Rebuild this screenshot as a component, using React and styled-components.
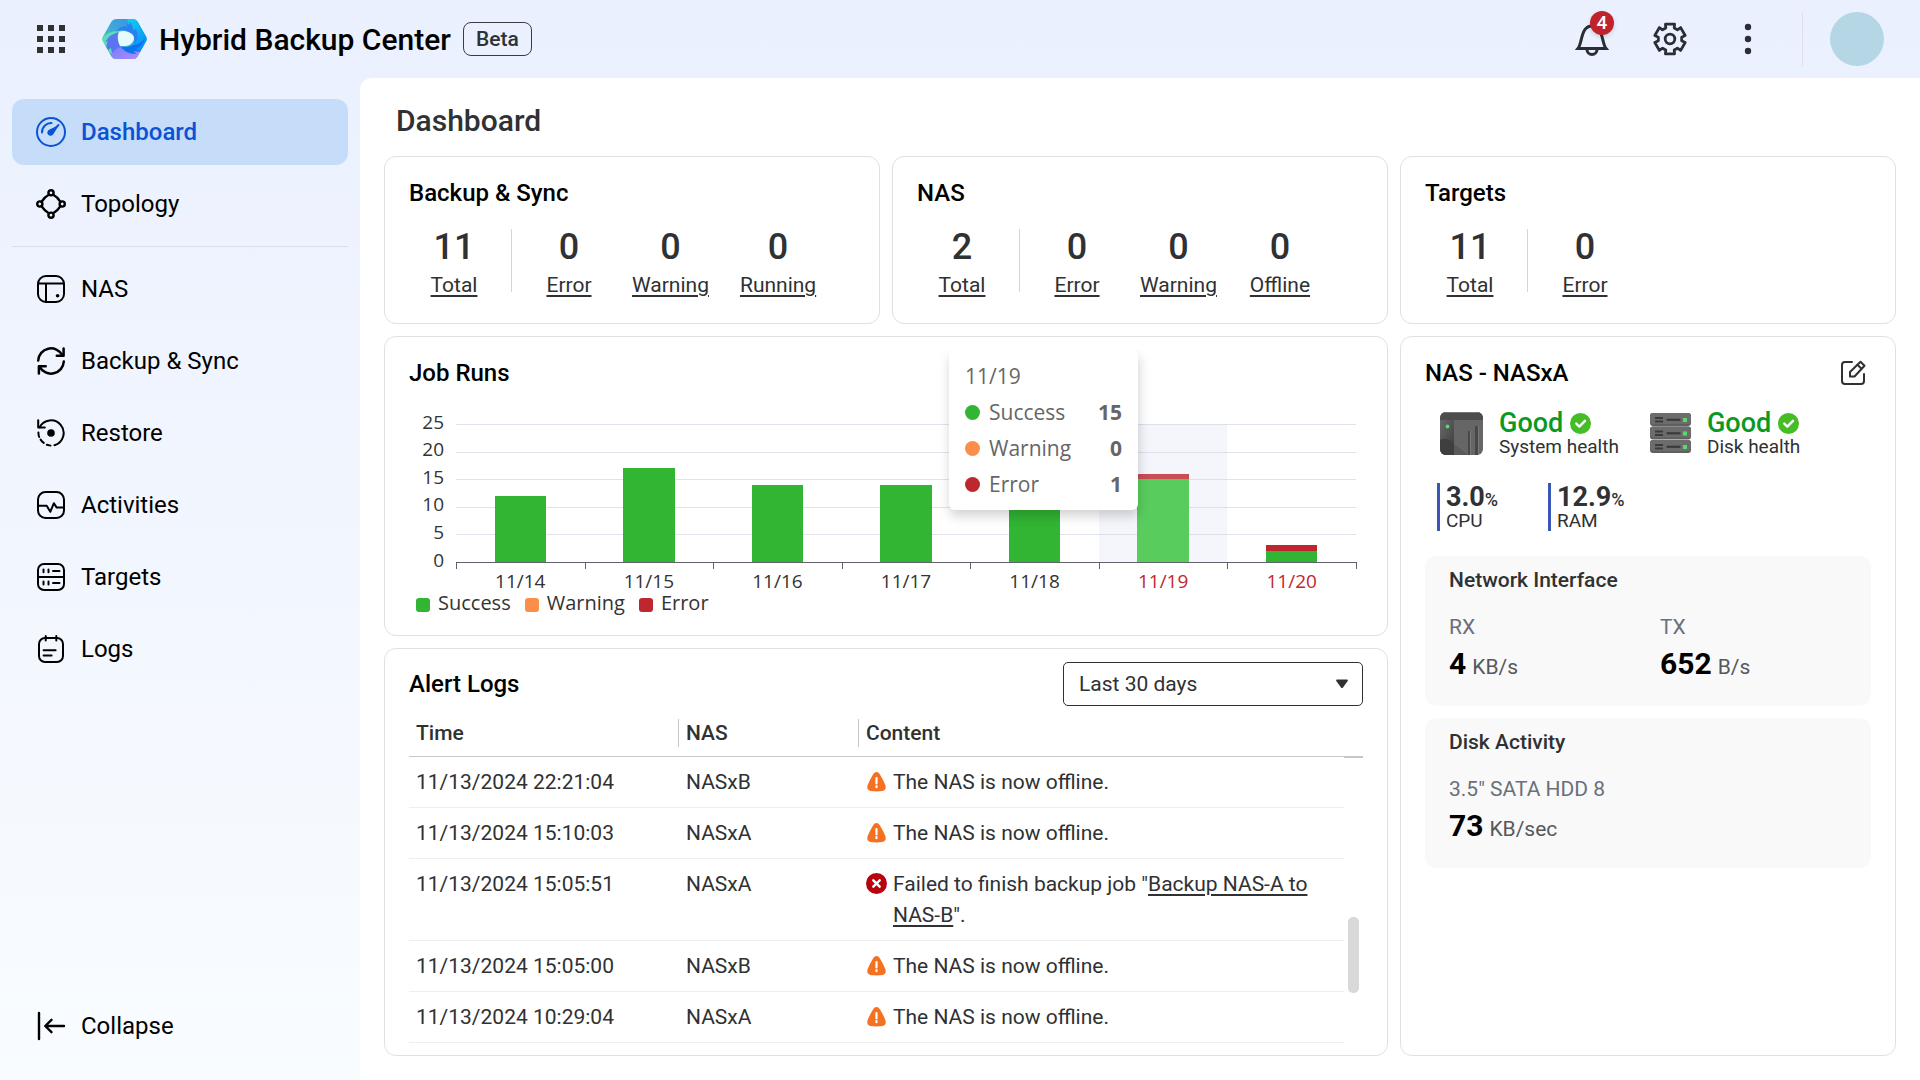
import React, { useState } from "react"
import styled, { createGlobalStyle } from "styled-components"

const GlobalStyle = createGlobalStyle`
  *,
  *::before,
  *::after {
    box-sizing: border-box;
  }

  body {
    margin: 0;
    font-family: Roboto, "Liberation Sans", sans-serif;
    font-size: 21px;
    line-height: 24px;
    color: #2f3133;
  }

  a {
    color: inherit;
  }

  button {
    font: inherit;
    color: inherit;
    border: none;
    background: none;
    padding: 0;
    cursor: pointer;
  }

  h1,
  h2,
  h3,
  p,
  ul,
  dl,
  dd {
    margin: 0;
    padding: 0;
  }

  ul {
    list-style: none;
  }
`

const Page = styled.div`
  display: flex;
  flex-direction: column;
  min-height: 100vh;
  background: linear-gradient(#eaf0fe, #f9fcff);
`

const TopBar = styled.header`
  display: flex;
  align-items: center;
  height: 78px;
  padding: 0 36px;
`

const Brand = styled.div`
  display: flex;
  align-items: center;
  gap: 12px;
  margin-left: 36px;
`

const BrandName = styled.h1`
  font-size: 30px;
  line-height: 36px;
  padding-top: 2px;
  font-weight: 500;
  color: #000;
`

const BetaTag = styled.span`
  padding: 4px 12px;
  border: 1px solid #3a3d42;
  border-radius: 8px;
  font-weight: 500;
`

const Tools = styled.div`
  display: flex;
  align-items: center;
  gap: 42px;
  margin-left: auto;
`

const IconButton = styled.button`
  position: relative;
  display: flex;
  align-items: center;
  justify-content: center;
  width: ${(props) => props.$size || 36}px;
  height: ${(props) => props.$size || 36}px;
`

const EditButton = styled(IconButton)`
  margin-right: 4px;
`

const Badge = styled.span`
  position: absolute;
  top: -10px;
  right: -4px;
  width: 24px;
  height: 24px;
  border-radius: 50%;
  background: #c1232b;
  color: #fff;
  font-size: 19px;
  font-weight: 500;
  text-align: center;
  box-shadow: 0 2px 4px rgba(0, 0, 0, 0.15);
`

const Account = styled.div`
  margin-left: 36px;
  padding-left: 27px;
  border-left: 1px solid #e2dfe8;
`

const Avatar = styled.button`
  display: block;
  width: 54px;
  height: 54px;
  border-radius: 50%;
  background: #b5d6e5;
`

const Body = styled.div`
  display: flex;
  flex: 1;
`

const Sidebar = styled.nav`
  display: flex;
  flex-direction: column;
  gap: 6px;
  flex: 0 0 360px;
  padding: 21px 12px;
`

const NavItem = styled.a`
  display: flex;
  align-items: center;
  gap: 15px;
  height: 66px;
  padding: 0 24px;
  border-radius: 12px;
  font-size: 24px;
  text-decoration: none;
  color: ${(props) => (props.$active ? "#0a53d4" : "#000")};
  font-weight: ${(props) => (props.$active ? 500 : 400)};
  background: ${(props) => (props.$active ? "#c6ddf9" : "transparent")};
`

const NavDivider = styled.hr`
  width: 100%;
  margin: 3px 0;
  border: none;
  border-top: 1px solid #d9dfea;
`

const CollapseButton = styled(NavItem)`
  margin-top: auto;
`

const Main = styled.main`
  display: flex;
  flex-direction: column;
  flex: 1;
  min-width: 0;
  padding: 25px 24px 24px;
  border-top-left-radius: 12px;
  background: #fff;
`

const PageTitle = styled.h2`
  padding: 0 12px;
  margin-bottom: 17px;
  font-size: 30px;
  line-height: 36px;
  font-weight: 500;
`

const Grid = styled.div`
  display: grid;
  flex: 1;
  grid-template-columns: repeat(3, minmax(0, 1fr));
  grid-template-rows: auto auto 1fr;
  gap: 12px;
`

const Card = styled.section`
  position: relative;
  padding: 22px 24px 26px;
  border: 1px solid #e0e1e4;
  border-radius: 12px;
`

const WideCard = styled(Card)`
  grid-column: span 2;
  padding-bottom: ${(props) => props.$bottom};
  padding-top: ${(props) => props.$top || "22px"};
`

const TallCard = styled(Card)`
  grid-column: 3;
  grid-row: 2 / span 2;
`

const CardHead = styled.div`
  display: flex;
  align-items: center;
  justify-content: space-between;
`

const CardTitle = styled.h3`
  font-size: 24px;
  line-height: 28px;
  font-weight: 500;
  color: #000;
`

const Stats = styled.div`
  display: flex;
  gap: 31px;
  margin-top: 22px;
  padding-left: 13px;
`

const Stat = styled.div`
  display: flex;
  flex-direction: column;
  align-items: center;
  gap: 8px;
  min-width: 64px;

  &:first-child {
    margin-right: -6px;
  }
`

const StatDivider = styled.span`
  width: 1px;
  height: 63px;
  margin-right: -6px;
  background: #d3d5d9;
`

const StatValue = styled.span`
  font-size: 36px;
  line-height: 36px;
  font-weight: 500;
`

const TextLink = styled.a`
  text-decoration-thickness: 2px;
  text-underline-offset: 3px;
`

const ChartSvg = styled.svg`
  display: block;
  width: 100%;
  margin-top: 24px;
  overflow: visible;

  text {
    font-family: "Open Sans", "Noto Sans", sans-serif;
    font-size: 19px;
    fill: #333;
  }
`

const Legend = styled.ul`
  display: flex;
  gap: 14px;
  padding: 1px 0 0 7px;
  font-family: "Open Sans", "Noto Sans", sans-serif;
  font-size: 20px;
  line-height: 20px;
  color: #333;
`

const LegendItem = styled.li`
  display: flex;
  align-items: center;
  gap: 8px;

  &::before {
    content: "";
    width: 14px;
    height: 14px;
    margin-top: 4px;
    border-radius: 3px;
    background: ${(props) => props.$color};
  }
`

const Tooltip = styled.div`
  position: absolute;
  top: 13px;
  left: 564px;
  width: 189px;
  padding: 13px 16px 3px;
  border-radius: 6px;
  background: #fff;
  box-shadow: 1px 6px 12px rgba(0, 0, 0, 0.18);
  clip-path: inset(0 -20px -24px -20px);
  font-family: "Open Sans", "Noto Sans", sans-serif;
  line-height: 26px;
  color: #666;
`

const TooltipRow = styled.div`
  display: flex;
  align-items: center;
  gap: 9px;
  height: 26px;
  margin: 10px 0;

  &::before {
    content: "";
    width: 15px;
    height: 15px;
    border-radius: 50%;
    background: ${(props) => props.$color};
  }

  b {
    margin-left: auto;
  }
`

const SelectWrap = styled.div`
  position: relative;
  width: 300px;

  svg {
    position: absolute;
    top: 17px;
    right: 14px;
    pointer-events: none;
  }
`

const Select = styled.select`
  display: block;
  width: 100%;
  height: 44px;
  padding: 0 15px;
  border: 1px solid #2f3133;
  border-radius: 5px;
  appearance: none;
  background: #fff;
  font: inherit;
  color: inherit;
`

const LogArea = styled.div`
  display: flex;
  margin-top: 13px;
`

const LogTable = styled.table`
  flex: 1;
  table-layout: fixed;
  border-collapse: separate;
  border-spacing: 0;

  th {
    padding: 0 0 9px;
    border-bottom: 1px solid #c6c7c9;
    font-weight: 500;
    text-align: left;
  }

  td {
    padding: 10px 0 9px 8px;
    border-bottom: 1px solid #efefef;
    line-height: 31px;
    vertical-align: top;
  }

  td:first-child {
    padding-left: 7px;
  }
`

const HeadCell = styled.span`
  display: block;
  padding-left: 7px;
  border-left: ${(props) => (props.$first ? "none" : "1px solid #c6c7c9")};
  line-height: 28px;
`

const LogContent = styled.div`
  display: flex;
  gap: 6px;

  svg {
    flex: none;
    margin-top: 4px;
  }
`

const Gutter = styled.div`
  display: flex;
  flex-direction: column;
  align-items: center;
  width: 19px;

  &::before {
    content: "";
    width: 100%;
    height: 39px;
    border-bottom: 2px solid #c6c7c9;
  }
`

const Thumb = styled.span`
  width: 11px;
  height: 76px;
  margin-top: 159px;
  border-radius: 5px;
  background: #d9d9d9;
`

const HealthRow = styled.div`
  display: flex;
  gap: 31px;
  margin-top: 23px;
  padding-left: 15px;
`

const Health = styled.div`
  display: flex;
  align-items: center;
  gap: 16px;
`

const HealthState = styled.p`
  display: flex;
  align-items: center;
  gap: 7px;
  font-size: 27px;
  line-height: 27px;
  font-weight: 500;
  color: #0a9a24;
`

const SmallLabel = styled.p`
  font-size: 19px;
  line-height: 20px;
`

const Metrics = styled.div`
  display: grid;
  grid-template-columns: 111px 111px;
  margin-top: 26px;
  padding-left: 12px;
`

const Metric = styled.div`
  padding-left: 6px;
  border-left: 3px solid #3a57b5;
`

const MetricValue = styled.p`
  font-size: 27px;
  line-height: 28px;
  font-weight: 700;

  small {
    font-size: 18px;
    line-height: 18px;
    font-weight: 500;
  }
`

const Panel = styled.section`
  margin-top: ${(props) => props.$gap};
  padding: 12px 24px 24px;
  border-radius: 12px;
  background: #f9f9f9;
`

const PanelTitle = styled.h3`
  font-size: 21px;
  line-height: 24px;
  font-weight: 500;
`

const PanelGrid = styled.dl`
  display: grid;
  grid-template-columns: 1fr 1fr;
  gap: 24px;
  margin-top: 23px;

  dt {
    color: #6b6f7b;
  }

  dd {
    display: flex;
    align-items: baseline;
    gap: 6px;
    margin-top: 7px;
    line-height: 24px;
    color: #55585c;
  }

  strong {
    font-size: 30px;
    line-height: 36px;
    color: #000;
  }
`

const NavSvg = ({ children }) => (
  <svg width="30" height="30" viewBox="0 0 30 30" fill="none" stroke="currentColor" strokeWidth="2" strokeLinecap="round" strokeLinejoin="round" aria-hidden="true">
    {children}
  </svg>
)

const icons = {
  dashboard: (
    <NavSvg>
      <circle cx="15" cy="15" r="14" />
      <path d="M6 15.5A9.2 9.2 0 0 1 15.5 6" />
      <path d="M23 8 17.3 17.2A3.2 3.2 0 1 1 13 12.8Z" fill="currentColor" stroke="none" />
      <path d="M22.5 8 15 15.5" />
    </NavSvg>
  ),
  topology: (
    <NavSvg>
      <circle cx="15" cy="3.8" r="2.6" strokeWidth="2.4" />
      <circle cx="15" cy="26.2" r="2.6" strokeWidth="2.4" />
      <circle cx="3.8" cy="15" r="2.6" strokeWidth="2.4" />
      <circle cx="26.2" cy="15" r="2.6" strokeWidth="2.4" />
      <path d="M12.8 5.8Q8.5 8 5.5 12.8M17.2 5.8Q21.5 8 24.5 12.8M5.5 17.2Q8.5 22 12.8 24.2M24.5 17.2Q21.5 22 17.2 24.2" strokeWidth="2.4" />
    </NavSvg>
  ),
  nas: (
    <NavSvg>
      <rect x="2" y="2" width="26" height="26" rx="8" />
      <path d="M2.5 9.5h25M10 9.5V28" />
      <circle cx="21.6" cy="21.7" r="1.8" fill="currentColor" stroke="none" />
    </NavSvg>
  ),
  sync: (
    <NavSvg>
      <g strokeWidth="2.5">
        <path d="M2.2 14.5A12.8 12.8 0 0 1 26.3 9.2" />
        <path d="M27.6 2.5v7.2h-6.8" />
        <path d="M27.8 15.5A12.8 12.8 0 0 1 3.7 20.8" />
        <path d="M2.9 27.5v-7.2h6.8" />
      </g>
    </NavSvg>
  ),
  restore: (
    <NavSvg>
      <path d="M3.6 9.3A12.7 12.7 0 1 1 18.5 27.2" />
      <path d="M2.2 2.3v7.2h6.6" />
      <path d="M2.4 14.5Q2.4 17 3.2 19M4.6 21.6Q6 23.6 7.8 24.9M10.8 26.7 14.6 27.6" />
      <circle cx="15" cy="15" r="3.8" fill="currentColor" stroke="none" />
    </NavSvg>
  ),
  activities: (
    <NavSvg>
      <rect x="2" y="2" width="26" height="26" rx="7.5" />
      <path d="M2.5 15.8h8.2l3.6 6 3.6-8.6 2.8 4.4h6.8" />
    </NavSvg>
  ),
  targets: (
    <NavSvg>
      <rect x="2" y="2" width="26" height="26" rx="6" />
      <path d="M2.5 15h25M7.5 7.4v2.8M12.5 7.4v2.8M17 9h6.5M7.5 19.6v2.8M12.5 19.6v2.8M17 21h6.5" />
    </NavSvg>
  ),
  logs: (
    <NavSvg>
      <rect x="3" y="4" width="24" height="24" rx="6" />
      <path d="M9.7 2v4.5M20.3 2v4.5M7.6 16.3h12M7.6 21.5h8" />
    </NavSvg>
  ),
  collapse: (
    <NavSvg>
      <path d="M3 2v26" strokeWidth="2.4" />
      <path d="M28 15H9.5M15.5 8.8 9.2 15l6.3 6.2" strokeWidth="2.4" />
    </NavSvg>
  ),
}

const AppsIcon = () => (
  <svg width="30" height="30" viewBox="0 0 30 30" fill="#2f3133">
    {[1, 12, 23].map((y) => [1, 12, 23].map((x) => <rect key={`${x}-${y}`} x={x} y={y} width="6" height="6" />))}
  </svg>
)

const Logo = () => (
  <svg width="45" height="42" viewBox="0 0 45 42" aria-hidden="true">
    <defs>
      <linearGradient id="logoTop" x1="0" y1="1" x2="1" y2="0">
        <stop offset="0" stopColor="#4be3b0" />
        <stop offset="0.5" stopColor="#3fa8d8" />
        <stop offset="1" stopColor="#2f8bef" />
      </linearGradient>
      <linearGradient id="logoRight" x1="0" y1="0" x2="0.6" y2="1">
        <stop offset="0" stopColor="#12d3ee" />
        <stop offset="1" stopColor="#0a8cf8" />
      </linearGradient>
      <linearGradient id="logoBottom" x1="0" y1="0" x2="1" y2="1">
        <stop offset="0" stopColor="#5f7cf5" />
        <stop offset="1" stopColor="#b58bff" />
      </linearGradient>
      <clipPath id="logoHex">
        <path d="M14 1h17q3 0 4.500 2.600l8.500 15q1.400 2.400 0 4.800l-8.500 15Q34 41 31 41H14q-3 0-4.500-2.600L1 23.400Q-.4 21 1 18.600l8.500-15Q11 1 14 1Z" />
      </clipPath>
    </defs>
    <g clipPath="url(#logoHex)">
      <path d="M0 0h45v42H0Z" fill="url(#logoTop)" />
      <path d="M25 0H45V30L33 36 30 28Q35 20 28 13Z" fill="url(#logoRight)" />
      <path d="M3 28 8 21 17 27 27 33 41 33 34 42H8Z" fill="url(#logoBottom)" />
      <path d="M0 20Q8 12 17 13L8 23 11 36 4 34Z" fill="#5adfb4" />
      <path d="M3 24Q8 16 17 14Q14 23 19 29Q13 30 10 36L9 30 6 32Q3 28 6 23Z" fill="#5b74f2" />
      <path d="M14 14Q19 6 26 9L24 5 28 7 27 3Q31 7 31 12L34 11Q38 19 33 26Q32 14 22 12Q17 11 14 14Z" fill="#2a80ee" />
      <path d="M43 20Q38 27 31 27Q24 31 18 27Q22 36 35 36L31 33 40 34 34 31Q41 28 43 20Z" fill="#0d72ee" />
    </g>
    <path d="M17 13.500Q25 11.500 31 17Q33.500 21 30 25Q26 29 18 28Q14 20 17 13.500Z" fill="#e4fbff" />
  </svg>
)

const BellIcon = () => (
  <svg width="34" height="36" viewBox="0 0 34 36" fill="none" stroke="#2a2f35" strokeWidth="3">
    <path d="M3 27.500C7.500 22 5.500 5 17 5S26.500 22 31 27.500Z" />
    <path d="M12 28.500a5 5 0 0 0 10 0" />
  </svg>
)

// six teeth, one every 60 degrees, starting at the top
const gearPoints = () => {
  const corners = [
    [-21, 11.8],
    [-17, 15.6],
    [17, 15.6],
    [21, 11.8],
  ]
  const points = []
  for (let tooth = 0; tooth < 6; tooth += 1) {
    corners.forEach(([offset, radius]) => {
      const angle = ((tooth * 60 + offset) * Math.PI) / 180
      points.push(`${18 + radius * Math.sin(angle)},${18 - radius * Math.cos(angle)}`)
    })
  }
  return points.join(" ")
}

const GearIcon = () => (
  <svg width="36" height="36" viewBox="0 0 36 36" fill="none" stroke="#2a2f35" strokeWidth="2.800" strokeLinejoin="round">
    <polygon points={gearPoints()} />
    <circle cx="18" cy="18" r="4.800" />
  </svg>
)

const MoreIcon = () => (
  <svg width="8" height="32" viewBox="0 0 8 32" fill="#2a2f35">
    <circle cx="4" cy="4" r="3.200" />
    <circle cx="4" cy="16" r="3.200" />
    <circle cx="4" cy="28" r="3.200" />
  </svg>
)

const EditIcon = () => (
  <svg width="26" height="26" viewBox="0 0 26 26" fill="none" stroke="#2f3133" strokeWidth="2" strokeLinecap="round" strokeLinejoin="round">
    <path d="M12 2H5Q2 2 2 5v16q0 3 3 3h16q3 0 3-3v-7" />
    <path d="M10 16.500v-4.500L20.500 1.700l4 4L14.500 16.500Z" />
    <path d="M17.500 4.800l4 4" />
  </svg>
)

const WarningIcon = () => (
  <svg width="21" height="21" viewBox="0 0 21 21" role="img" aria-label="Warning">
    <path d="M10.500 1q2 0 3.200 2 4 6.500 5.800 11.500 1 4.500-3 5.500-6 .8-12 0-4-1-3-5.500Q3.300 9.500 7.300 3 8.500 1 10.500 1Z" fill="#f37121" />
    <path d="M10.500 7v5.500M10.500 15.200v1" stroke="#fff" strokeWidth="2.200" strokeLinecap="round" />
  </svg>
)

const ErrorIcon = () => (
  <svg width="21" height="21" viewBox="0 0 21 21" role="img" aria-label="Error">
    <circle cx="10.500" cy="10.500" r="10.500" fill="#b8040f" />
    <path d="m7.300 7.300 6.400 6.400m0-6.400-6.400 6.400" stroke="#fff" strokeWidth="2.400" strokeLinecap="round" />
  </svg>
)

const CheckIcon = () => (
  <svg width="21" height="21" viewBox="0 0 21 21" aria-hidden="true">
    <circle cx="10.500" cy="10.500" r="10.500" fill="#45bd25" />
    <path d="m6.300 10.600 3 3 5.700-5.800" fill="none" stroke="#fff" strokeWidth="2.400" strokeLinecap="round" strokeLinejoin="round" />
  </svg>
)

const NasDevice = () => (
  <svg width="43" height="43" viewBox="0 0 43 43" aria-hidden="true">
    <defs>
      <linearGradient id="nasSide" x1="0" y1="0" x2="1" y2="1">
        <stop offset="0" stopColor="#686868" />
        <stop offset="1" stopColor="#3c3c3c" />
      </linearGradient>
      <clipPath id="nasBody">
        <rect width="43" height="43" rx="6" />
      </clipPath>
    </defs>
    <g clipPath="url(#nasBody)">
      <rect width="43" height="43" fill="#666" />
      <path d="M0 8h14v35H0Z" fill="url(#nasSide)" />
      <path d="M0 28Q7 24 14 32V43H0Z" fill="#3f3f3f" />
      <path d="M14 32l14 11H14Z" fill="#5a5a5a" />
      <path d="M0 0h43v8H0Z" fill="#4d4d4d" />
      <path d="M0 0h43v1H0Z" fill="#777" />
      <path d="M28 19h2v24h-2ZM35 14h3v29h-3Z" fill="#484848" />
      <path d="M30 19h1v24h-1ZM38 14h1v29h-1Z" fill="#7a7a7a" />
    </g>
    <circle cx="7.500" cy="14.500" r="1.900" fill="#4fdc6c" />
  </svg>
)

const DiskStack = () => (
  <svg width="41" height="41" viewBox="0 0 41 41" aria-hidden="true">
    {[0, 13.5, 27].map((y) => (
      <g key={y} transform={`translate(0 ${y})`}>
        <rect width="41" height="13" rx="3" fill="#5f5f5f" />
        <rect width="41" height="11" rx="3" fill="#6c6c6c" />
        <path d="M5 5h8M5 8.500h8" stroke="#3b3b3b" strokeWidth="2" />
        <path d="M16.500 6.800h14" stroke="#3b3b3b" strokeWidth="2.200" />
        <rect x="33" y="5" width="4" height="4" fill="#55dd66" />
      </g>
    ))}
  </svg>
)

const COLORS = {
  success: "#31b533",
  warning: "#fb8f4a",
  error: "#bf272f",
}

const SERIES = [
  { key: "success", label: "Success" },
  { key: "warning", label: "Warning" },
  { key: "error", label: "Error" },
]

const runs = [
  { date: "11/14", success: 12, warning: 0, error: 0 },
  { date: "11/15", success: 17, warning: 0, error: 0 },
  { date: "11/16", success: 14, warning: 0, error: 0 },
  { date: "11/17", success: 14, warning: 0, error: 0 },
  { date: "11/18", success: 14, warning: 0, error: 0 },
  { date: "11/19", success: 15, warning: 0, error: 1 },
  { date: "11/20", success: 2, warning: 0, error: 1 },
]

const PLOT = { left: 47, right: 947, top: 13, bottom: 151, max: 25 }

const JobRunsChart = ({ active }) => {
  const step = (PLOT.right - PLOT.left) / runs.length
  const unit = (PLOT.bottom - PLOT.top) / PLOT.max
  const barWidth = step * 0.4

  return (
    <ChartSvg viewBox="0 0 954 181" role="img" aria-label="Job runs per day">
      <g shapeRendering="crispEdges">
        {[5, 10, 15, 20, 25].map((value) => (
          <rect key={value} x={PLOT.left} y={Math.round(PLOT.bottom - value * unit)} width={PLOT.right - PLOT.left} height="1" fill="#dfe3ec" />
        ))}
        <rect x={PLOT.left + active * step} y={PLOT.top} width={step} height={PLOT.bottom - PLOT.top} fill="rgba(210, 219, 238, 0.24)" />
        {runs.map((run, i) => {
          const x = PLOT.left + i * step + (step - barWidth) / 2
          const successTop = PLOT.bottom - run.success * unit
          const lit = i === active
          return (
            <g key={run.date}>
              <rect x={x} y={successTop} width={barWidth} height={run.success * unit} fill={lit ? "#58cd5e" : COLORS.success} />
              <rect x={x} y={successTop - run.error * unit} width={barWidth} height={run.error * unit} fill={lit ? "#cc4c54" : COLORS.error} />
            </g>
          )
        })}
        <rect x={PLOT.left} y={PLOT.bottom} width={PLOT.right - PLOT.left + 1} height="1" fill="#5f626c" />
        {[0, 1, 2, 3, 4, 5, 6, 7].map((i) => (
          <rect key={i} x={Math.round(PLOT.left + i * step)} y={PLOT.bottom} width="1" height="7" fill="#5f626c" />
        ))}
      </g>
      {[0, 5, 10, 15, 20, 25].map((value) => (
        <text key={value} x="35" y={Math.floor(PLOT.bottom - value * unit) + 5} textAnchor="end">
          {value}
        </text>
      ))}
      {runs.map((run, i) => (
        <text key={run.date} x={PLOT.left + (i + 0.5) * step} y="177" textAnchor="middle" style={{ fill: run.error ? COLORS.error : "#333" }}>
          {run.date}
        </text>
      ))}
    </ChartSvg>
  )
}

const navTop = [
  { icon: "dashboard", label: "Dashboard" },
  { icon: "topology", label: "Topology" },
]

const navMain = [
  { icon: "nas", label: "NAS" },
  { icon: "sync", label: "Backup & Sync" },
  { icon: "restore", label: "Restore" },
  { icon: "activities", label: "Activities" },
  { icon: "targets", label: "Targets" },
  { icon: "logs", label: "Logs" },
]

const summaries = [
  { title: "Backup & Sync", total: 11, rest: [["Error", 0], ["Warning", 0], ["Running", 0]] },
  { title: "NAS", total: 2, rest: [["Error", 0], ["Warning", 0], ["Offline", 0]] },
  { title: "Targets", total: 11, rest: [["Error", 0]] },
]

const logs = [
  { time: "11/13/2024 22:21:04", nas: "NASxB" },
  { time: "11/13/2024 15:10:03", nas: "NASxA" },
  { time: "11/13/2024 15:05:51", nas: "NASxA", job: "Backup NAS-A to NAS-B" },
  { time: "11/13/2024 15:05:00", nas: "NASxB" },
  { time: "11/13/2024 10:29:04", nas: "NASxA" },
]

const SummaryCard = ({ title, total, rest }) => (
  <Card>
    <CardTitle>{title}</CardTitle>
    <Stats>
      <Stat>
        <StatValue>{total}</StatValue>
        <TextLink href="#total">Total</TextLink>
      </Stat>
      <StatDivider />
      {rest.map(([label, value]) => (
        <Stat key={label}>
          <StatValue>{value}</StatValue>
          <TextLink href={`#${label.toLowerCase()}`}>{label}</TextLink>
        </Stat>
      ))}
    </Stats>
  </Card>
)

const JobRuns = () => {
  const active = 5

  return (
    <WideCard $bottom="22px">
      <CardTitle>Job Runs</CardTitle>
      <JobRunsChart active={active} />
      <Legend>
        {SERIES.map((s) => (
          <LegendItem key={s.key} $color={COLORS[s.key]}>
            {s.label}
          </LegendItem>
        ))}
      </Legend>
      <Tooltip role="tooltip">
        {runs[active].date}
        {SERIES.map((s) => (
          <TooltipRow key={s.key} $color={COLORS[s.key]}>
            {s.label}
            <b>{runs[active][s.key]}</b>
          </TooltipRow>
        ))}
      </Tooltip>
    </WideCard>
  )
}

const AlertLogs = () => {
  const [range, setRange] = useState("30")

  return (
    <WideCard $top="13px" $bottom="12px">
      <CardHead>
        <CardTitle>Alert Logs</CardTitle>
        <SelectWrap>
          <Select aria-label="Time range" value={range} onChange={(e) => setRange(e.target.value)}>
            <option value="7">Last 7 days</option>
            <option value="30">Last 30 days</option>
          </Select>
          <svg width="14" height="10" viewBox="0 0 14 10" fill="#2f3133">
            <path d="M2 .5h10q1.500.2.700 1.500L8 8.500q-1 1-2 0L1.300 2Q.5.700 2 .5Z" />
          </svg>
        </SelectWrap>
      </CardHead>
      <LogArea>
        <LogTable>
          <colgroup>
            <col width="269" />
            <col width="180" />
            <col />
          </colgroup>
          <thead>
            <tr>
              <th><HeadCell $first>Time</HeadCell></th>
              <th><HeadCell>NAS</HeadCell></th>
              <th><HeadCell>Content</HeadCell></th>
            </tr>
          </thead>
          <tbody>
            {logs.map((log) => (
              <tr key={log.time}>
                <td>{log.time}</td>
                <td>{log.nas}</td>
                <td>
                  <LogContent>
                    {log.job ? <ErrorIcon /> : <WarningIcon />}
                    {log.job ? (
                      <span>
                        Failed to finish backup job "<TextLink href="#job">{log.job}</TextLink>".
                      </span>
                    ) : (
                      <span>The NAS is now offline.</span>
                    )}
                  </LogContent>
                </td>
              </tr>
            ))}
          </tbody>
        </LogTable>
        <Gutter>
          <Thumb />
        </Gutter>
      </LogArea>
    </WideCard>
  )
}

const NasDetails = () => (
  <TallCard>
    <CardHead>
      <CardTitle>NAS - NASxA</CardTitle>
      <EditButton $size={28} aria-label="Edit">
        <EditIcon />
      </EditButton>
    </CardHead>
    <HealthRow>
      <Health>
        <NasDevice />
        <div>
          <HealthState>Good <CheckIcon /></HealthState>
          <SmallLabel>System health</SmallLabel>
        </div>
      </Health>
      <Health>
        <DiskStack />
        <div>
          <HealthState>Good <CheckIcon /></HealthState>
          <SmallLabel>Disk health</SmallLabel>
        </div>
      </Health>
    </HealthRow>
    <Metrics>
      <Metric>
        <MetricValue>3.0<small>%</small></MetricValue>
        <SmallLabel>CPU</SmallLabel>
      </Metric>
      <Metric>
        <MetricValue>12.9<small>%</small></MetricValue>
        <SmallLabel>RAM</SmallLabel>
      </Metric>
    </Metrics>
    <Panel $gap="25px">
      <PanelTitle>Network Interface</PanelTitle>
      <PanelGrid>
        <div>
          <dt>RX</dt>
          <dd><strong>4</strong> KB/s</dd>
        </div>
        <div>
          <dt>TX</dt>
          <dd><strong>652</strong> B/s</dd>
        </div>
      </PanelGrid>
    </Panel>
    <Panel $gap="12px">
      <PanelTitle>Disk Activity</PanelTitle>
      <PanelGrid>
        <div>
          <dt>3.5" SATA HDD 8</dt>
          <dd><strong>73</strong> KB/sec</dd>
        </div>
      </PanelGrid>
    </Panel>
  </TallCard>
)

const App = () => (
  <Page>
    <GlobalStyle />
    <TopBar>
      <IconButton $size={30} aria-label="Apps">
        <AppsIcon />
      </IconButton>
      <Brand>
        <Logo />
        <BrandName>Hybrid Backup Center</BrandName>
        <BetaTag>Beta</BetaTag>
      </Brand>
      <Tools>
        <IconButton aria-label="Notifications">
          <BellIcon />
          <Badge>4</Badge>
        </IconButton>
        <IconButton aria-label="Settings">
          <GearIcon />
        </IconButton>
        <IconButton aria-label="More">
          <MoreIcon />
        </IconButton>
      </Tools>
      <Account>
        <Avatar aria-label="Account" />
      </Account>
    </TopBar>
    <Body>
      <Sidebar>
        {navTop.map((item) => (
          <NavItem key={item.label} href={`#${item.icon}`} $active={item.icon === "dashboard"}>
            {icons[item.icon]}
            {item.label}
          </NavItem>
        ))}
        <NavDivider />
        {navMain.map((item) => (
          <NavItem key={item.label} href={`#${item.icon}`}>
            {icons[item.icon]}
            {item.label}
          </NavItem>
        ))}
        <CollapseButton as="button">
          {icons.collapse}
          Collapse
        </CollapseButton>
      </Sidebar>
      <Main>
        <PageTitle>Dashboard</PageTitle>
        <Grid>
          {summaries.map((summary) => (
            <SummaryCard key={summary.title} {...summary} />
          ))}
          <JobRuns />
          <NasDetails />
          <AlertLogs />
        </Grid>
      </Main>
    </Body>
  </Page>
)

export default App
